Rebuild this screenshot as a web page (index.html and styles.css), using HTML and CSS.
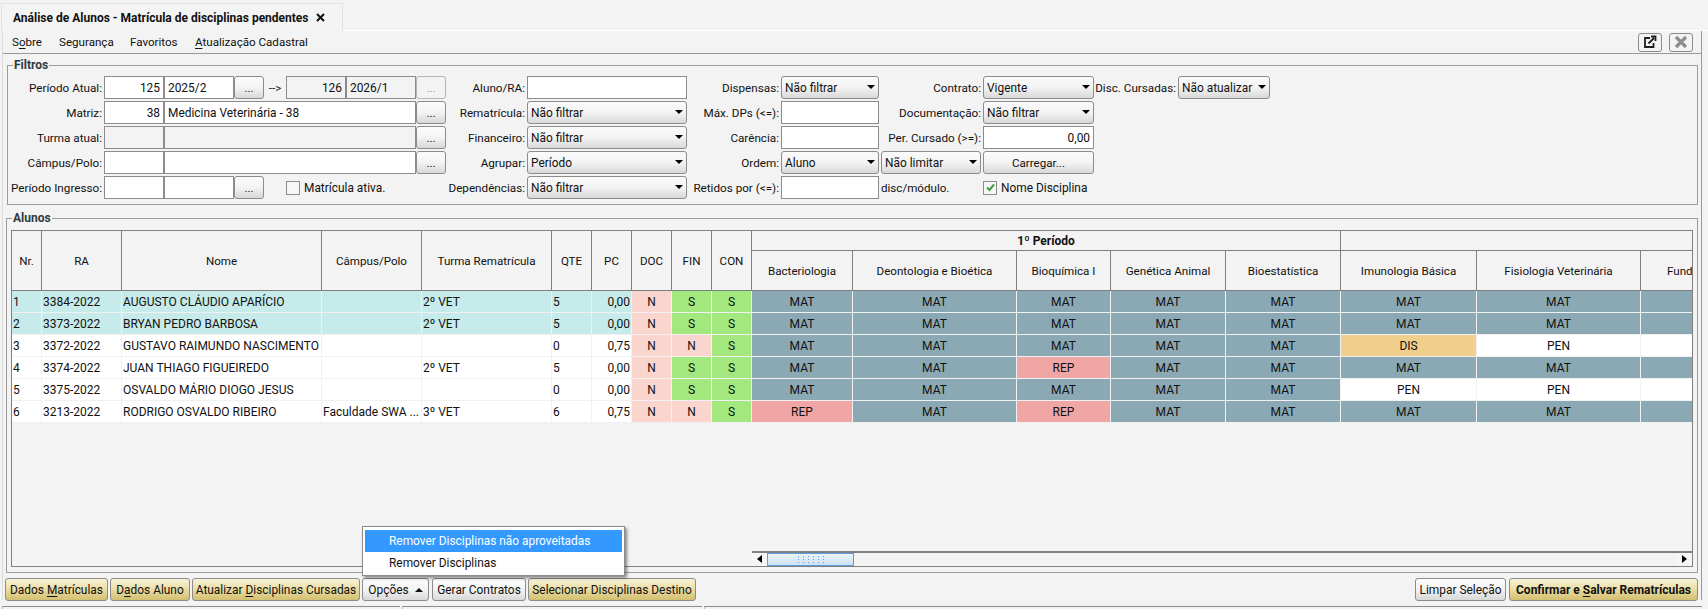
FILE: index.html
```html
<!DOCTYPE html>
<html lang="pt-BR">
<head>
<meta charset="utf-8">
<title>Análise de Alunos</title>
<link rel="stylesheet" href="styles.css">
</head>
<body>
<div class="app">
  <div class="tabstrip">
    <div class="tab"><span class="tab-title">Análise de Alunos - Matrícula de disciplinas pendentes</span>
      <svg class="tab-close" width="9" height="9" viewBox="0 0 9 9"><path d="M1 1L8 8M8 1L1 8" stroke="#111" stroke-width="2"/></svg>
    </div>
  </div>
  <div class="window">
    <div class="menubar">
      <span class="menu-item m1">S<u>o</u>bre</span>
      <span class="menu-item m2">Segurança</span>
      <span class="menu-item m3">Favoritos</span>
      <span class="menu-item"><u>A</u>tualização Cadastral</span>
      <div class="menu-actions">
        <button class="icon-btn"><svg width="14" height="14" viewBox="0 0 14 14"><path d="M7 3H2V12H10.500V8" fill="none" stroke="#222" stroke-width="1.800"/><path d="M5.500 8.500L11 3M8 1.500H12.500V6" fill="none" stroke="#222" stroke-width="1.800"/></svg></button>
        <button class="icon-btn"><svg width="14" height="14" viewBox="0 0 14 14"><path d="M2 2L12 12M12 2L2 12" stroke="#8e8e8e" stroke-width="3.200"/></svg></button>
      </div>
    </div>

    <section class="group filters">
      <span class="legend">Filtros</span>
      <div class="form-grid">
        <label class="lbl">Período Atual:</label>
        <div class="input num">125</div><div class="input">2025/2</div><button class="btn dots">...</button>
        <span class="arrow-text">--&gt;</span>
        <div class="input num off">126</div><div class="input off">2026/1</div><button class="btn dots off-btn">...</button>
        <label class="lbl">Aluno/RA:</label><div class="input"></div>
        <label class="lbl">Dispensas:</label><div class="select">Não filtrar</div>
        <label class="lbl">Contrato:</label><div class="select">Vigente</div>
        <label class="lbl">Disc. Cursadas:</label><div class="select">Não atualizar</div>

        <label class="lbl">Matriz:</label>
        <div class="input num">38</div><div class="input s5">Medicina Veterinária - 38</div><button class="btn dots">...</button>
        <label class="lbl">Rematrícula:</label><div class="select">Não filtrar</div>
        <label class="lbl">Máx. DPs (&lt;=):</label><div class="input"></div>
        <label class="lbl">Documentação:</label><div class="select">Não filtrar</div>
        <span class="s2"></span>

        <label class="lbl">Turma atual:</label>
        <div class="input off"></div><div class="input off s5"></div><button class="btn dots">...</button>
        <label class="lbl">Financeiro:</label><div class="select">Não filtrar</div>
        <label class="lbl">Carência:</label><div class="input"></div>
        <label class="lbl">Per. Cursado (&gt;=):</label><div class="input num">0,00</div>
        <span class="s2"></span>

        <label class="lbl">Câmpus/Polo:</label>
        <div class="input"></div><div class="input s5"></div><button class="btn dots">...</button>
        <label class="lbl">Agrupar:</label><div class="select">Período</div>
        <label class="lbl">Ordem:</label><div class="select">Aluno</div>
        <div class="select inset">Não limitar</div><button class="btn">Carregar...</button>
        <span class="s2"></span>

        <label class="lbl">Período Ingresso:</label>
        <div class="input"></div><div class="input"></div><button class="btn dots">...</button>
        <span></span>
        <div class="check s3"><span class="box"></span>Matrícula ativa.</div>
        <label class="lbl">Dependências:</label><div class="select">Não filtrar</div>
        <label class="lbl">Retidos por (&lt;=):</label><div class="input"></div>
        <span class="plain">disc/módulo.</span>
        <div class="check"><span class="box"><svg width="11" height="11" viewBox="0 0 11 11"><path d="M2 5.500L4.500 8L9 2.500" fill="none" stroke="#3aa53a" stroke-width="2"/></svg></span>Nome Disciplina</div>
        <span class="s2"></span>
      </div>
    </section>

    <section class="group alunos">
      <span class="legend">Alunos</span>
      <div class="table-panel">
        <div class="table-clip">
        <table class="grid">
          <colgroup>
            <col class="c30"><col class="c80"><col class="c200"><col class="c100"><col class="c130"><col class="c40"><col class="c40"><col class="c40"><col class="c40"><col class="c40"><col class="c101"><col class="c164"><col class="c94"><col class="c115"><col class="c115"><col class="c136"><col class="c164"><col class="c100">
          </colgroup>
          <thead>
            <tr class="h1">
              <th rowspan="2">Nr.</th><th rowspan="2">RA</th><th rowspan="2">Nome</th><th rowspan="2">Câmpus/Polo</th><th rowspan="2">Turma Rematrícula</th><th rowspan="2">QTE</th><th rowspan="2">PC</th><th rowspan="2">DOC</th><th rowspan="2">FIN</th><th rowspan="2">CON</th>
              <th colspan="5" class="period">1º Período</th><th colspan="3"></th>
            </tr>
            <tr class="h2">
              <th>Bacteriologia</th><th>Deontologia e Bioética</th><th>Bioquímica I</th><th>Genética Animal</th><th>Bioestatística</th><th>Imunologia Básica</th><th>Fisiologia Veterinária</th><th class="left">Fundamentos</th>
            </tr>
          </thead>
          <tbody>
            <tr class="sel"><td>1</td><td>3384-2022</td><td>AUGUSTO CLÁUDIO APARÍCIO</td><td></td><td>2º VET</td><td>5</td><td class="r">0,00</td><td class="no">N</td><td class="yes">S</td><td class="yes">S</td><td class="mat">MAT</td><td class="mat">MAT</td><td class="mat">MAT</td><td class="mat">MAT</td><td class="mat">MAT</td><td class="mat">MAT</td><td class="mat">MAT</td><td class="mat"></td></tr>
            <tr class="sel"><td>2</td><td>3373-2022</td><td>BRYAN PEDRO BARBOSA</td><td></td><td>2º VET</td><td>5</td><td class="r">0,00</td><td class="no">N</td><td class="yes">S</td><td class="yes">S</td><td class="mat">MAT</td><td class="mat">MAT</td><td class="mat">MAT</td><td class="mat">MAT</td><td class="mat">MAT</td><td class="mat">MAT</td><td class="mat">MAT</td><td class="mat"></td></tr>
            <tr><td>3</td><td>3372-2022</td><td>GUSTAVO RAIMUNDO NASCIMENTO</td><td></td><td></td><td>0</td><td class="r">0,75</td><td class="no">N</td><td class="no">N</td><td class="yes">S</td><td class="mat">MAT</td><td class="mat">MAT</td><td class="mat">MAT</td><td class="mat">MAT</td><td class="mat">MAT</td><td class="dis">DIS</td><td class="pen">PEN</td><td class="pen"></td></tr>
            <tr><td>4</td><td>3374-2022</td><td>JUAN THIAGO FIGUEIREDO</td><td></td><td>2º VET</td><td>5</td><td class="r">0,00</td><td class="no">N</td><td class="yes">S</td><td class="yes">S</td><td class="mat">MAT</td><td class="mat">MAT</td><td class="rep">REP</td><td class="mat">MAT</td><td class="mat">MAT</td><td class="mat">MAT</td><td class="mat">MAT</td><td class="mat"></td></tr>
            <tr><td>5</td><td>3375-2022</td><td>OSVALDO MÁRIO DIOGO JESUS</td><td></td><td></td><td>0</td><td class="r">0,00</td><td class="no">N</td><td class="yes">S</td><td class="yes">S</td><td class="mat">MAT</td><td class="mat">MAT</td><td class="mat">MAT</td><td class="mat">MAT</td><td class="mat">MAT</td><td class="pen">PEN</td><td class="pen">PEN</td><td class="pen"></td></tr>
            <tr><td>6</td><td>3213-2022</td><td>RODRIGO OSVALDO RIBEIRO</td><td>Faculdade SWA ...</td><td>3º VET</td><td>6</td><td class="r">0,75</td><td class="no">N</td><td class="no">N</td><td class="yes">S</td><td class="rep">REP</td><td class="mat">MAT</td><td class="rep">REP</td><td class="mat">MAT</td><td class="mat">MAT</td><td class="mat">MAT</td><td class="mat">MAT</td><td class="mat"></td></tr>
          </tbody>
        </table>
        </div>
        <div class="hscroll">
          <span class="sb-arrow left-arrow"></span>
          <span class="sb-thumb"><span class="grip"></span></span>
          <span class="sb-track"></span>
          <span class="sb-arrow right-arrow"></span>
        </div>
      </div>
    </section>

    <div class="footer">
      <button class="btn gold w103">Dados <u>M</u>atrículas</button>
      <button class="btn gold w80">D<u>a</u>dos Aluno</button>
      <button class="btn gold w168">Atualizar <u>D</u>isciplinas Cursadas</button>
      <div class="menu-wrap">
        <button class="btn w67">Opções <span class="up"></span></button>
        <div class="popup">
          <div class="popup-item active">Remover Disciplinas não aproveitadas</div>
          <div class="popup-item">Remover Disciplinas</div>
        </div>
      </div>
      <button class="btn w94">Gerar Contratos</button>
      <button class="btn gold w168b">Selecionar Disciplinas Destino</button>
      <span class="grow"></span>
      <button class="btn w91">Limpar Seleção</button>
      <button class="btn gold strong w189">Confirmar e <u>S</u>alvar Rematrículas</button>
    </div>
  </div>
  <div class="statusbar"><span class="sp1"></span><span class="sp2"></span><span class="sp3"></span></div>
</div>
</body>
</html>
```
FILE: styles.css
```css
* { box-sizing: border-box; }
html, body { margin: 0; padding: 0; }
body { width: 1708px; height: 609px; overflow: hidden; background: #f3f3f3; color: #111; font: 11.6px/16px Roboto, "Noto Sans", sans-serif; }
button { font: inherit; color: inherit; padding: 0; }
u { text-decoration: underline; text-underline-offset: 2px; }

.app { width: 1708px; height: 609px; display: flex; flex-direction: column; position: relative; }
.tabstrip { height: 31px; padding: 3px 0 0 1px; border-bottom: 1px solid #fff; flex: none; }
.tab { width: 342px; height: 28px; display: flex; align-items: center; padding-left: 11px; gap: 7px; background: #f4f4f4; border: 1px solid #e2e2e2; border-bottom: 0; }
.tab-title { font-weight: 700; font-size: 12px; white-space: nowrap; }

.window { flex: 1; min-height: 0; width: 1700px; margin-left: 2px; border-left: 1px solid #dcdcdc; border-right: 1px solid #9a9a9a; display: flex; flex-direction: column; }
.menubar { height: 23px; flex: none; display: flex; align-items: center; padding-left: 9px; border-bottom: 1px solid #9a9a9a; }
.menu-item { white-space: nowrap; }
.m1 { width: 47px; } .m2 { width: 71px; } .m3 { width: 65px; }
.menu-actions { margin-left: auto; display: flex; gap: 7px; padding-right: 8px; }
.icon-btn { width: 24px; height: 19px; border: 1px solid #8a8a8a; border-radius: 3px; background: #f4f4f4; display: flex; align-items: center; justify-content: center; }

.group { position: relative; border: 1px solid #9c9c9c; flex: none; }
.legend { position: absolute; left: 5px; top: -9px; padding: 0 1px; background: #f3f3f3; font-weight: 700; font-size: 12px; color: #2b3a40; }
.filters { margin: 11px 3px 0 4px; height: 140px; padding-top: 10px; }
.alunos { margin: 13px 3px 0 3px; height: 355px; padding: 11px 4px 4px 4px; }

.form-grid { display: grid; grid-template-columns: 96px 60px 70px 30px 22px 60px 70px 30px 81px 160px 94px 98px 104px 111px 84px 92px; grid-auto-rows: 23px; row-gap: 2px; }
.lbl { display: flex; align-items: center; justify-content: flex-end; white-space: nowrap; padding: 1px 2px 0 0; font-size: 11.7px; }
.input { border: 1px solid #8c8c8c; background: #fff; padding: 1px 3px 0; line-height: 20px; font-size: 11.9px; white-space: nowrap; overflow: hidden; }
.input.num { text-align: right; }
.input.off { background: #f3f3f3; }
.s5 { grid-column: span 5; }
.s3 { grid-column: span 3; }
.s2 { grid-column: span 2; }
.arrow-text { display: flex; align-items: center; justify-content: center; padding-top: 1px; }
.plain { display: flex; align-items: center; padding: 1px 0 0 2px; white-space: nowrap; }
.select { position: relative; border: 1px solid #8c8c8c; border-radius: 3px; background: linear-gradient(#fbfbfb 0, #f3f3f3 50%, #d9d9d9 100%); padding: 1px 3px 0; line-height: 20px; font-size: 11.9px; white-space: nowrap; }
.select::after { content: ""; position: absolute; right: 3px; top: 8px; border: 4.5px solid transparent; border-top: 4.5px solid #000; border-bottom: 0; }
.select.inset { margin: 0 2px; }
.btn { border: 1px solid #8c8c8c; border-radius: 3px; background: linear-gradient(#fcfcfc 0, #f3f3f3 50%, #d8d8d8 100%); text-align: center; white-space: nowrap; }
.dots { line-height: 14px; }
.off-btn { color: #9a9a9a; background: #f3f3f3; border-color: #b5b5b5; }
.check { display: flex; align-items: center; gap: 4px; font-size: 11.9px; white-space: nowrap; }
.box { width: 14px; height: 14px; border: 1px solid #8c8c8c; background: #f6f6f6; display: flex; align-items: center; justify-content: center; }

.table-panel { border: 1px solid #808080; height: 337px; display: flex; flex-direction: column; overflow: hidden; }
.table-clip { flex: 1; min-height: 0; overflow: hidden; }
.grid { border-collapse: separate; border-spacing: 0; table-layout: fixed; width: 1729px; }
.c30 { width: 30px; } .c80 { width: 80px; } .c200 { width: 200px; } .c100 { width: 100px; } .c130 { width: 130px; } .c40 { width: 40px; } .c101 { width: 101px; } .c164 { width: 164px; } .c94 { width: 94px; } .c115 { width: 115px; } .c136 { width: 136px; }
.grid th { background: #f3f3f3; font-weight: 400; padding: 1px 0 0; border-right: 1px solid #808080; border-bottom: 1px solid #808080; white-space: nowrap; overflow: hidden; }
.h1 th { height: 20px; }
.h2 th { height: 40px; }
.grid th.period { font-weight: 700; font-size: 12px; }
.grid th.left { text-align: left; padding-left: 26px; }
.grid td { height: 22px; padding: 0 1px; font-size: 12px; background: #fff; border-right: 1px solid #f1f1f1; border-bottom: 1px solid #f1f1f1; white-space: nowrap; overflow: hidden; }
.grid tr.sel td { background: #c6ebea; }
.grid td.r { text-align: right; }
.grid td.no, .grid td.yes, .grid td.mat, .grid td.rep, .grid td.dis, .grid td.pen { text-align: center; }
.grid tr td.no { background: #fad5ce; }
.grid tr td.yes { background: #a3e87f; }
.grid tr td.mat { background: #8ba9b4; }
.grid tr td.rep { background: #f1a6a6; }
.grid tr td.dis { background: #f0ce8c; }
.grid tr td.pen { background: #fff; }

.hscroll { flex: none; height: 15px; margin-left: 740px; display: flex; border-top: 2px solid #808080; }
.sb-arrow { width: 15px; background: #f6f6f6; position: relative; flex: none; }
.left-arrow::after, .right-arrow::after { content: ""; position: absolute; top: 2px; border: 4px solid transparent; border-left-width: 0; border-right: 5px solid #000; left: 5px; }
.right-arrow::after { border-right-width: 0; border-left: 5px solid #000; }
.sb-thumb { width: 87px; flex: none; border: 1px solid #5c9bdc; background: linear-gradient(#e9f3fc, #cfe2f3); display: flex; align-items: center; justify-content: center; }
.grip { width: 30px; height: 9px; background-image: radial-gradient(circle, #5c9bdc 0.8px, transparent 1px); background-size: 5px 3px; }
.sb-track { flex: 1; background: #f3f3f3; }

.footer { display: flex; align-items: flex-start; height: 22px; margin-top: 5px; flex: none; padding: 0 3px 0 2px; gap: 2px; font-size: 11.9px; }
.footer .btn { height: 23px; flex: none; }
.gold { background: linear-gradient(#f8f3d8 0, #ecdfa6 45%, #d2bf71 100%); }
.strong { font-weight: 700; margin-left: 1px; }
.footer .strong { font-size: 12px; }
.w103 { width: 103px; } .w80 { width: 80px; } .w168 { width: 168px; } .w67 { width: 67px; } .w94 { width: 94px; } .w168b { width: 168px; } .w91 { width: 91px; } .w189 { width: 189px; }
.grow { flex: 1; }
.menu-wrap { position: relative; margin: 0 1px 0 0; }
.up { display: inline-block; vertical-align: 2px; margin-left: 3px; border: 4px solid transparent; border-top: 0; border-bottom: 4px solid #111; }
.popup { position: absolute; left: 0; bottom: 25px; width: 263px; height: 50px; padding: 3px 2px; background: #fff; border: 1px solid #8c8c8c; box-shadow: 2px 2px 3px rgba(0,0,0,.45); z-index: 5; }
.popup-item { height: 22px; line-height: 22px; padding-left: 24px; white-space: nowrap; }
.popup-item.active { background: #3399ff; color: #fff; }

.statusbar { height: 3px; flex: none; margin-top: 6px; display: flex; gap: 2px; padding: 0 6px 0 2px; }
.statusbar span { border-top: 1px solid #8c8c8c; border-left: 1px solid #bbb; }
.sp1 { width: 398px; } .sp2 { width: 300px; } .sp3 { flex: 1; }
```
